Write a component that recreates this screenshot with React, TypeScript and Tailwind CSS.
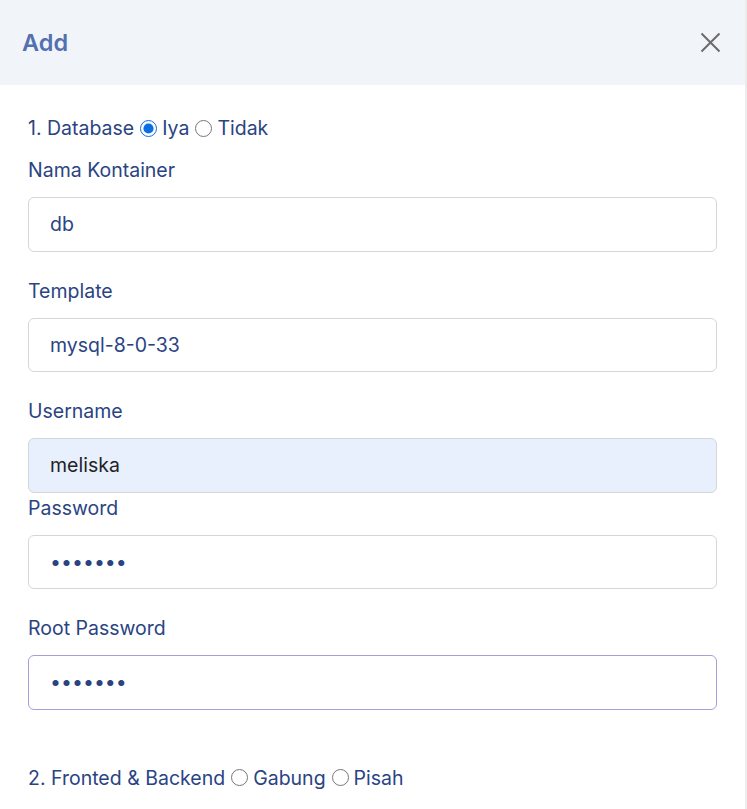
import React from 'react';

const labelCls = 'block text-[19.5px] leading-[28px] text-[#2a4483]';
const inputCls =
  'block w-full h-[54.5px] rounded-md border border-[#d3d6db] bg-white px-[21px] text-[19.5px] text-[#2a4483] outline-none';

const Field: React.FC<{
  label: string;
  value: string;
  type?: string;
  extra?: string;
  last?: boolean;
}> = ({ label, value, type = 'text', extra = '', last }) => (
  <div className={last ? 'mb-px' : 'mb-[25px]'}>
    <label className={labelCls + ' mb-[13px]'}>{label}</label>
    <input type={type} defaultValue={value} readOnly className={inputCls + ' ' + extra} />
  </div>
);

const Radio: React.FC<{ name: string; label: string; checked?: boolean }> = ({ name, label, checked }) => (
  <label className="inline-flex items-center">
    <input
      type="radio"
      name={name}
      defaultChecked={checked}
      className="ml-[6px] mr-[5px] h-[17px] w-[17px] accent-[#0b6fe0]"
    />
    <span>{label}</span>
  </label>
);

export default function App() {
  return (
    <div
      className="h-[809px] w-[747px] overflow-hidden bg-white border-r-2 border-[#ececec]"
      style={{ fontFamily: 'Inter, "Noto Sans", sans-serif' }}
    >
      <div className="flex h-[85px] items-center justify-between bg-[#f1f5f9] pl-[22px] pr-[24px]">
        <h2 className="text-[23.5px] font-semibold text-[#5570b0]">Add</h2>
        <svg width="21" height="21" viewBox="0 0 21 21" fill="none" stroke="#6b6b6b" strokeWidth="2">
          <path d="M1.5 1.5L19.5 19.5M19.5 1.5L1.5 19.5" />
        </svg>
      </div>
      <div className="px-[28px] pt-[29px]">
        <div className={labelCls + ' mb-[14px] flex items-center'}>
          <span>1. Database</span>
          <Radio name="db" label="Iya" checked />
          <Radio name="db" label="Tidak" />
        </div>
        <Field label="Nama Kontainer" value="db" />
        <Field label="Template" value="mysql-8-0-33" />
        <Field label="Username" value="meliska" extra="!bg-[#e8f0fe] !text-[#222]" last />
        <Field label="Password" value="1234567" type="password" />
        <Field label="Root Password" value="1234567" type="password" extra="!border-[#a59fdc]" />
        <div className={labelCls + ' mt-[54px] flex items-center'}>
          <span>2. Fronted &amp; Backend</span>
          <Radio name="fb" label="Gabung" />
          <Radio name="fb" label="Pisah" />
        </div>
      </div>
    </div>
  );
}
